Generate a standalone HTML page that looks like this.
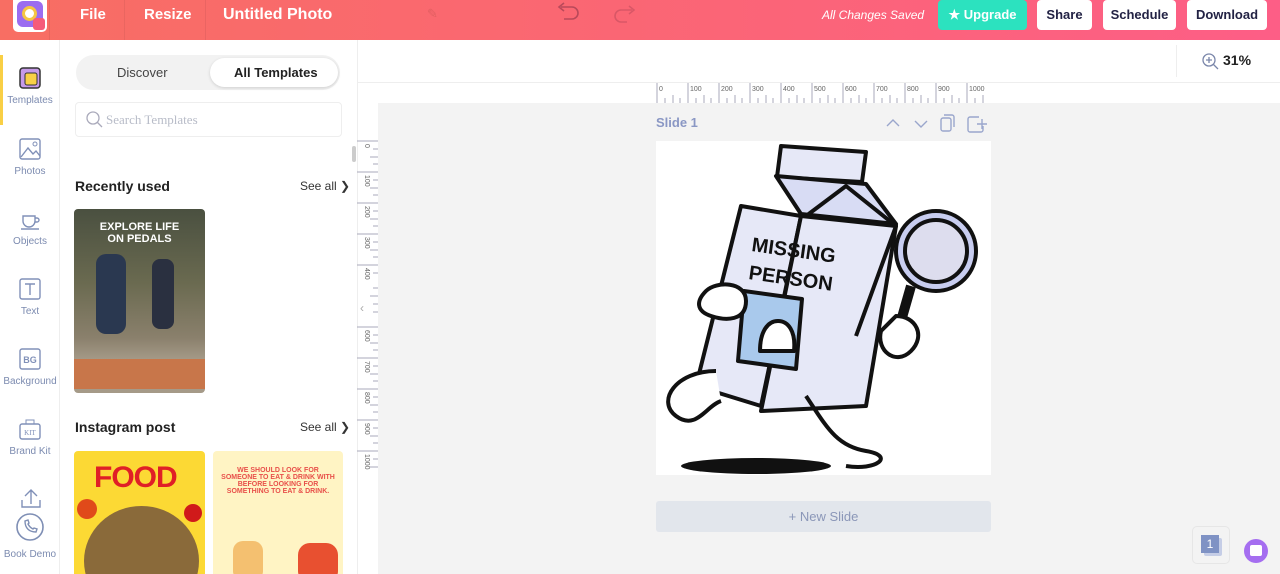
<!DOCTYPE html>
<html><head><meta charset="utf-8"><style>
*{margin:0;padding:0;box-sizing:border-box}
html,body{width:1280px;height:574px;overflow:hidden}
body{font-family:"Liberation Sans",sans-serif;background:#fff;position:relative}
.hdr{position:absolute;left:0;top:0;width:1280px;height:40px;background:linear-gradient(90deg,#f86e63,#fd5e86)}
.hdr .t{position:absolute;color:#fff;font-weight:bold;font-size:15px;top:6px}
.sep{position:absolute;top:0;width:1px;height:40px;background:rgba(0,0,0,.06)}
.btn{position:absolute;top:0;height:30px;background:#fff;border-radius:4px;color:#222244;font-weight:bold;font-size:13px;line-height:30px;text-align:center}
.ab{position:absolute}
.side{position:absolute;left:0;top:40px;width:60px;height:534px;border-right:1px solid #eee;background:#fff;overflow:hidden}
.si{position:absolute;left:0;width:60px;text-align:center;font-size:10px;color:#7c8bb0}
.si svg{display:block;margin:0 auto 6px}
.h3{position:absolute;font-size:14px;font-weight:bold;color:#222}
.see{position:absolute;font-size:12px;color:#333}
</style></head><body>
<div class="hdr">
 <div class="ab" style="left:13px;top:0;width:34px;height:32px;background:#fff;border-radius:0 0 5px 5px"></div>
 <div class="ab" style="left:17px;top:1px;width:26px;height:26px;background:#9b6cf0;border-radius:6px"></div>
 <div class="ab" style="left:22px;top:6px;width:15px;height:15px;background:#fff;border-radius:50%;border:3px solid #f5c642"></div>
 <div class="ab" style="left:33px;top:18px;width:12px;height:12px;background:#f55b7a;border-radius:3px"></div>
 <div class="sep" style="left:49px"></div><div class="sep" style="left:124px"></div><div class="sep" style="left:205px"></div>
 <div class="t" style="left:80px">File</div>
 <div class="t" style="left:144px">Resize</div>
 <div class="t" style="left:223px;font-size:16px">Untitled Photo</div>
 <div class="ab" style="left:427px;top:6px;color:#c55;font-size:13px;opacity:.5">✎</div>
 <svg class="ab" style="left:555px;top:2px" width="26" height="20"><path d="M6 5h11a6 6 0 0 1 0 12h-8" fill="none" stroke="#b9495a" stroke-width="1.6"/><path d="M9 1L4 5l5 4" fill="none" stroke="#b9495a" stroke-width="1.6"/></svg>
 <svg class="ab" style="left:612px;top:4px" width="26" height="22" opacity=".5"><path d="M20 6H9a6 6 0 0 0 0 12h6" fill="none" stroke="#b9495a" stroke-width="1.6"/><path d="M17 2l5 4-5 4" fill="none" stroke="#b9495a" stroke-width="1.6"/></svg>
 <div class="ab" style="left:822px;top:8px;color:#fff;font-style:italic;font-size:12px">All Changes Saved</div>
 <div class="btn" style="left:938px;width:89px;background:#2ce2bf;color:#fff">★ Upgrade</div>
 <div class="btn" style="left:1037px;width:55px">Share</div>
 <div class="btn" style="left:1103px;width:73px">Schedule</div>
 <div class="btn" style="left:1187px;width:80px">Download</div>
</div>
<div class="side">
 <div class="ab" style="left:0;top:15px;width:3px;height:70px;background:#f9cf45"></div>
 <div class="si" style="top:27px"><svg width="22" height="22"><rect x="1" y="1" width="20" height="20" rx="3" fill="#c69ae8" stroke="#333" stroke-width="1.5"/><rect x="6" y="6" width="12" height="12" rx="2" fill="#f8d046" stroke="#333"/></svg>Templates</div>
 <div class="si" style="top:98px"><svg width="22" height="22"><rect x="1" y="1" width="20" height="20" rx="2" fill="none" stroke="#8090b8" stroke-width="1.4"/><path d="M2 19l7-9 5 6 3-3 4 5" fill="none" stroke="#8090b8" stroke-width="1.4"/><circle cx="16" cy="6" r="2" fill="none" stroke="#8090b8"/></svg>Photos</div>
 <div class="si" style="top:168px"><svg width="22" height="22"><path d="M4 8h12v5a6 6 0 0 1-12 0z M16 10h2a2 2 0 0 1 0 4h-2 M2 21h18" fill="none" stroke="#8090b8" stroke-width="1.4"/></svg>Objects</div>
 <div class="si" style="top:238px"><svg width="22" height="22"><rect x="1" y="1" width="20" height="20" rx="2" fill="none" stroke="#8090b8" stroke-width="1.4"/><path d="M6 6h10M11 6v11" stroke="#8090b8" stroke-width="1.4"/></svg>Text</div>
 <div class="si" style="top:308px"><svg width="22" height="22"><rect x="1" y="1" width="20" height="20" rx="2" fill="none" stroke="#8090b8" stroke-width="1.4"/><text x="11" y="15" font-size="9" font-weight="bold" text-anchor="middle" fill="#8090b8" font-family="Liberation Sans">BG</text></svg>Background</div>
 <div class="si" style="top:378px"><svg width="22" height="22"><rect x="1" y="6" width="20" height="15" rx="2" fill="none" stroke="#8090b8" stroke-width="1.4"/><path d="M7 6V2h8v4" fill="none" stroke="#8090b8"/><text x="11" y="17" font-size="7" text-anchor="middle" fill="#8090b8" font-family="Liberation Serif">KIT</text></svg>Brand Kit</div>
 <svg class="ab" style="left:20px;top:448px" width="22" height="20"><path d="M11 16V2M5 8l6-6 6 6M2 12v7h18v-7" fill="none" stroke="#8090b8" stroke-width="1.4"/></svg>
 <svg class="ab" style="left:15px;top:472px" width="30" height="30"><circle cx="15" cy="15" r="13" fill="#fff" stroke="#7f8fb5" stroke-width="1.6"/><path d="M10 9c0 7 4 11 11 11l1-3-3-1-1 1c-2-1-4-3-5-5l1-1-1-3z" fill="none" stroke="#7f8fb5" stroke-width="1.4"/></svg>
 <div class="si" style="top:509px">Book Demo</div>
</div>
<div class="ab" style="left:76px;top:55px;width:264px;height:35px;background:#f2f2f2;border-radius:18px"></div>
<div class="ab" style="left:210px;top:58px;width:128px;height:29px;background:#fff;border-radius:15px;box-shadow:0 1px 3px rgba(0,0,0,.15)"></div>
<div class="ab" style="left:117px;top:65px;font-size:13px;color:#444">Discover</div>
<div class="ab" style="left:234px;top:65px;font-size:13px;font-weight:bold;color:#222">All Templates</div>
<div class="ab" style="left:75px;top:102px;width:267px;height:35px;border:1px solid #eee;border-radius:4px"></div>
<svg class="ab" style="left:86px;top:111px" width="18" height="18"><circle cx="7" cy="7" r="6" fill="none" stroke="#aab" stroke-width="1.3"/><path d="M11 11l5 5" stroke="#aab" stroke-width="1.3"/></svg>
<div class="ab" style="left:106px;top:112px;font-size:13px;color:#b8bcc8;font-family:'Liberation Serif',serif">Search Templates</div>
<div class="ab" style="left:352px;top:146px;width:4px;height:16px;background:#ccc;border-radius:2px"></div>
<div class="h3" style="left:75px;top:178px">Recently used</div>
<div class="see" style="left:300px;top:179px">See all ❯</div>
<div class="ab" style="left:74px;top:209px;width:131px;height:184px;border-radius:4px;overflow:hidden;background:linear-gradient(180deg,#4a5040 0%,#6a6a50 40%,#8a806c 70%,#a59a88 82%)">
 <div class="ab" style="left:0;top:12px;width:131px;text-align:center;color:#fff;font-size:11px;font-weight:bold;line-height:12px">EXPLORE LIFE<br>ON PEDALS</div>
 <div class="ab" style="left:22px;top:45px;width:30px;height:80px;background:#2a3850;border-radius:10px"></div>
 <div class="ab" style="left:78px;top:50px;width:22px;height:70px;background:#2a3040;border-radius:8px"></div>
 <div class="ab" style="left:0;top:150px;width:131px;height:30px;background:#c8764a"></div>
</div>
<div class="h3" style="left:75px;top:419px">Instagram post</div>
<div class="see" style="left:300px;top:420px">See all ❯</div>
<div class="ab" style="left:74px;top:451px;width:131px;height:123px;background:#fcd934;border-radius:4px 4px 0 0;overflow:hidden">
 <div class="ab" style="left:20px;top:10px;font-size:30px;font-weight:bold;color:#e01f26;letter-spacing:-1px">FOOD</div>
 <div class="ab" style="left:10px;top:55px;width:115px;height:110px;border-radius:50%;background:#8a6a3a"></div>
 <div class="ab" style="left:3px;top:48px;width:20px;height:20px;border-radius:50%;background:#e04a1a"></div>
 <div class="ab" style="left:110px;top:53px;width:18px;height:18px;border-radius:50%;background:#d01a1a"></div>
</div>
<div class="ab" style="left:213px;top:451px;width:130px;height:123px;background:#fff4c4;border-radius:4px 4px 0 0;overflow:hidden">
 <div class="ab" style="left:8px;top:16px;width:114px;text-align:center;font-size:7px;font-weight:bold;color:#e8504a;line-height:7px">WE SHOULD LOOK FOR SOMEONE TO EAT &amp; DRINK WITH BEFORE LOOKING FOR SOMETHING TO EAT &amp; DRINK.</div>
 <div class="ab" style="left:20px;top:90px;width:30px;height:40px;background:#f4c070;border-radius:10px"></div>
 <div class="ab" style="left:85px;top:92px;width:40px;height:40px;background:#e85030;border-radius:12px"></div>
</div>
<div class="ab" style="left:357px;top:40px;width:1px;height:534px;background:#eee"></div>
<div class="ab" style="left:357px;top:82px;width:923px;height:1px;background:#eee"></div>
<div class="ab" style="left:1176px;top:45px;width:1px;height:32px;background:#eee"></div>
<svg class="ab" style="left:1201px;top:52px" width="18" height="18"><circle cx="8" cy="8" r="6" fill="none" stroke="#7a86aa" stroke-width="1.3"/><path d="M12 12l5 5M5 8h6M8 5v6" stroke="#7a86aa" stroke-width="1.3"/></svg>
<div class="ab" style="left:1223px;top:52px;font-size:14px;font-weight:bold;color:#222">31%</div>
<div class="ab" style="left:378px;top:103px;width:902px;height:471px;background:#f3f3f3"></div>
<svg class="ab" style="left:656px;top:83px" width="340" height="20" font-family="Liberation Sans" font-size="7" fill="#666">
 <g stroke="#aab" stroke-width="1">
 <path d="M1 0v20M32 0v20M63 0v20M94 0v20M125 0v20M156 0v20M187 0v20M218 0v20M249 0v20M280 0v20M311 0v20"/>
 <path d="M9 15v5M17 12v8M24 15v5M40 15v5M48 12v8M55 15v5M71 15v5M79 12v8M86 15v5M102 15v5M110 12v8M117 15v5M133 15v5M141 12v8M148 15v5M164 15v5M172 12v8M179 15v5M195 15v5M203 12v8M210 15v5M226 15v5M234 12v8M241 15v5M257 15v5M265 12v8M272 15v5M288 15v5M296 12v8M303 15v5M319 15v5M327 12v8"/></g>
 <text x="3" y="8">0</text><text x="34" y="8">100</text><text x="65" y="8">200</text><text x="96" y="8">300</text><text x="127" y="8">400</text><text x="158" y="8">500</text><text x="189" y="8">600</text><text x="220" y="8">700</text><text x="251" y="8">800</text><text x="282" y="8">900</text><text x="313" y="8">1000</text>
</svg>
<svg class="ab" style="left:357px;top:140px" width="21" height="340" font-family="Liberation Sans" font-size="7" fill="#666">
 <g stroke="#aab"><path d="M0 1h21M0 32h21M0 63h21M0 94h21M0 125h21M0 187h21M0 218h21M0 249h21M0 280h21M0 311h21"/>
 <path d="M16 9h5M13 17h8M16 24h5M16 40h5M13 48h8M16 55h5M16 71h5M13 79h8M16 86h5M16 102h5M13 110h8M16 117h5M16 133h5M16 148h5M13 156h8M16 164h5M16 172h5M16 195h5M13 203h8M16 210h5M16 226h5M13 234h8M16 241h5M16 257h5M13 265h8M16 272h5M16 288h5M13 296h8M16 303h5M16 319h5M13 327h8"/></g>
 <g transform="rotate(90)"><text x="4" y="-8">0</text><text x="35" y="-8">100</text><text x="66" y="-8">200</text><text x="97" y="-8">300</text><text x="128" y="-8">400</text><text x="190" y="-8">600</text><text x="221" y="-8">700</text><text x="252" y="-8">800</text><text x="283" y="-8">900</text><text x="314" y="-8">1000</text></g>
 <text x="3" y="172" font-size="12" fill="#aaa">‹</text>
</svg>
<div class="ab" style="left:656px;top:115px;font-size:13px;font-weight:bold;color:#8a97c4">Slide 1</div>
<svg class="ab" style="left:884px;top:113px" width="106" height="20" fill="none" stroke="#9aa6cc" stroke-width="1.4"><path d="M3 13l6-6 6 6"/><path d="M31 8l6 6 6-6" /><rect x="57" y="5" width="10" height="13" rx="2"/><path d="M60 2h8a2 2 0 0 1 2 2v10"/><path d="M95 4h-9a2 2 0 0 0-2 2v11a2 2 0 0 0 2 2h11a2 2 0 0 0 2-2v-4M98 6v10M93 11h10"/></svg>
<div class="ab" style="left:656px;top:141px;width:335px;height:334px;background:#fff;overflow:hidden">
<svg width="335" height="334" stroke="#111" stroke-width="4" stroke-linejoin="round">
 <ellipse cx="100" cy="325" rx="75" ry="8" fill="#111" stroke="none"/>
 <path d="M125 5l85 6-4 30-85-5z" fill="#e6e8f7"/>
 <path d="M120 35l90 8 30 40-95-10z" fill="#d8dcf4"/>
 <path d="M85 65l60 10-40 190-65-20z" fill="#e6e8f7"/>
 <path d="M145 75l95 10-30 180-105 5z" fill="#e6e8f7"/>
 <path d="M150 75l40-30 50 40-40 110" fill="none"/>
 <text x="95" y="110" font-size="20" font-weight="bold" fill="#111" stroke="none" transform="rotate(8 95 110)" font-family="Liberation Sans">MISSING</text>
 <text x="92" y="138" font-size="20" font-weight="bold" fill="#111" stroke="none" transform="rotate(8 92 138)" font-family="Liberation Sans">PERSON</text>
 <path d="M88 150l58 8-6 70-58-8z" fill="#a9c9ec"/>
 <path d="M104 210c0-20 8-30 18-30s18 10 16 30z" fill="#fff"/>
 <circle cx="280" cy="110" r="40" fill="#c8cdf0"/>
 <circle cx="280" cy="110" r="31" fill="#dde"/>
 <path d="M255 145l-20 70" stroke-width="10"/>
 <path d="M50 150c10-10 40-10 40 10s-20 20-35 15-15-15-5-25z" fill="#fff"/>
 <path d="M240 175c20 0 30 20 15 35s-35 0-30-20z" fill="#fff"/>
 <path d="M60 230c-40 0-60 30-40 45s30-10 45-15" fill="#fff" />
 <path d="M150 255c20 30 30 50 60 55s10 20-20 15" fill="#fff"/>
</svg>
</div>
<div class="ab" style="left:656px;top:501px;width:335px;height:31px;background:#e2e6ec;border-radius:3px;color:#8b97b8;font-size:13px;text-align:center;line-height:31px">+ New Slide</div>
<div class="ab" style="left:1192px;top:526px;width:38px;height:38px;border:1px solid #e6e6e6;border-radius:5px"></div>
<div class="ab" style="left:1204px;top:538px;width:18px;height:18px;background:#c5cde6;border-radius:2px"></div>
<div class="ab" style="left:1201px;top:535px;width:18px;height:18px;background:#7f92c4;color:#fff;font-size:12px;text-align:center;line-height:18px">1</div>
<div class="ab" style="left:1244px;top:539px;width:24px;height:24px;background:#a56ef0;border-radius:50%"></div>
<div class="ab" style="left:1250px;top:545px;width:12px;height:11px;background:#fff;border-radius:2px"></div>
</body></html>
